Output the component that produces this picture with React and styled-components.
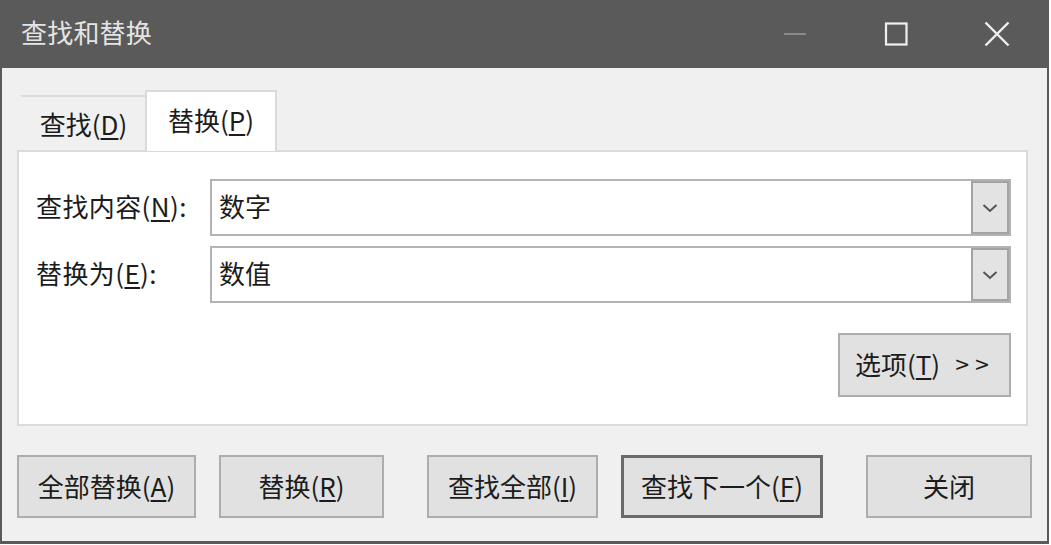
import React from 'react'
import styled, { createGlobalStyle } from 'styled-components'

const Global = createGlobalStyle`
  html, body { margin: 0; padding: 0; background: #fff; }
  body { font-family: "Noto Sans CJK SC", "Noto Sans", sans-serif; }
`

const Window = styled.div`
  width: 1049px;
  height: 544px;
  box-sizing: border-box;
  background: #5a5a5a;
  padding: 0 2px 3px 2px;
  display: flex;
  flex-direction: column;
`

const TitleBar = styled.div`
  height: 68px;
  flex: none;
  display: flex;
  align-items: center;
  padding-left: 19px;
`

const Title = styled.div`
  flex: 1;
  color: #e4e4e4;
  font-size: 26px;
  letter-spacing: 0.2px;
  padding-bottom: 5px;
`

const Caption = styled.div`
  width: 101px;
  height: 68px;
  display: flex;
  align-items: center;
  justify-content: center;
`

const Body = styled.div`
  flex: 1;
  background: #f0f0f0;
  padding: 0 15px;
  display: flex;
  flex-direction: column;
  color: #1c1c1c;
  font-size: 26px;
`

const Tabs = styled.div`
  margin-top: 22px;
  height: 60px;
  display: flex;
  align-items: flex-end;
  padding-left: 3px;
  position: relative;
  z-index: 1;
`

const Tab = styled.div`
  box-sizing: border-box;
  width: ${p => p.$w}px;
  height: ${p => (p.$active ? 61 : 55)}px;
  margin-bottom: ${p => (p.$active ? -1 : 0)}px;
  background: ${p => (p.$active ? '#fff' : '#f0f0f0')};
  border: 2px solid #dadada;
  border-bottom: none;
  border-left-color: ${p => (p.$active ? '#dadada' : 'transparent')};
  border-right: ${p => (p.$active ? '2px solid #dadada' : 'none')};
  display: flex;
  align-items: center;
  justify-content: center;
  padding-bottom: ${p => (p.$active ? 4 : 0)}px;
`

const Panel = styled.div`
  box-sizing: border-box;
  height: 276px;
  margin-right: 4px;
  background: #fff;
  border: 2px solid #dadada;
  padding: 27px 15px 27px 17px;
  display: flex;
  flex-direction: column;
`

const Row = styled.div`
  display: flex;
  align-items: center;
  margin-bottom: ${p => p.$mb || 0}px;
`

const Label = styled.div`
  width: 174px;
  flex: none;
  padding-bottom: 4px;
  letter-spacing: 0.4px;
`

const Combo = styled.div`
  flex: 1;
  height: 57px;
  box-sizing: border-box;
  border: 2px solid #b3b3b3;
  display: flex;
  align-items: stretch;
`

const ComboText = styled.div`
  flex: 1;
  display: flex;
  align-items: center;
  padding: 0 0 4px 7px;
`

const DropBtn = styled.div`
  width: 38px;
  box-sizing: border-box;
  background: #e3e3e3;
  border: 2px solid #a3a3a3;
  display: flex;
  align-items: center;
  justify-content: center;
`

const Key = styled.u`
  text-underline-offset: 3px;
  text-decoration-thickness: 1.5px;
`

const Options = styled.div`
  margin-top: 30px;
  display: flex;
  justify-content: flex-end;
`

const Button = styled.div`
  box-sizing: border-box;
  width: ${p => p.$w}px;
  height: ${p => p.$h || 63}px;
  margin-left: ${p => p.$ml || 0}px;
  flex: none;
  background: #e1e1e1;
  border: ${p => (p.$default ? '3px solid #6a6a6a' : '2px solid #adadad')};
  display: flex;
  align-items: center;
  justify-content: center;
  white-space: nowrap;
  padding-bottom: 3px;
`

const Arrows = styled.span`
  font-size: 19px;
  margin-left: 14px;
  letter-spacing: 4px;
  font-family: "DejaVu Sans", sans-serif;
`

const ButtonRow = styled.div`
  margin-top: 29px;
  display: flex;
`

const Chevron = () => (
  <svg width="16" height="10" viewBox="0 0 16 10">
    <path d="M1.5 2 L8 8 L14.5 2" fill="none" stroke="#555" strokeWidth="2" />
  </svg>
)

export default function App() {
  return (
    <>
      <Global />
      <Window>
        <TitleBar>
          <Title>查找和替换</Title>
          <Caption>
            <svg width="24" height="4" viewBox="0 0 24 4">
              <rect x="1" y="1" width="22" height="2" fill="#8a8a8a" />
            </svg>
          </Caption>
          <Caption>
            <svg width="24" height="24" viewBox="0 0 24 24">
              <rect x="2" y="1.5" width="20.5" height="21" fill="none" stroke="#f0f0f0" strokeWidth="2.2" />
            </svg>
          </Caption>
          <Caption>
            <svg width="26" height="26" viewBox="0 0 26 26">
              <path d="M1.5 1.5 L24.5 24.5 M24.5 1.5 L1.5 24.5" stroke="#f0f0f0" strokeWidth="2.4" />
            </svg>
          </Caption>
        </TitleBar>
        <Body>
          <Tabs>
            <Tab $w={125}>查找(<Key>D</Key>)</Tab>
            <Tab $w={132} $active>替换(<Key>P</Key>)</Tab>
          </Tabs>
          <Panel>
            <Row $mb={10}>
              <Label>查找内容(<Key>N</Key>):</Label>
              <Combo>
                <ComboText>数字</ComboText>
                <DropBtn><Chevron /></DropBtn>
              </Combo>
            </Row>
            <Row>
              <Label>替换为(<Key>E</Key>):</Label>
              <Combo>
                <ComboText>数值</ComboText>
                <DropBtn><Chevron /></DropBtn>
              </Combo>
            </Row>
            <Options>
              <Button $w={173} $h={64}>
                选项(<Key>T</Key>)<Arrows>&gt;&gt;</Arrows>
              </Button>
            </Options>
          </Panel>
          <ButtonRow>
            <Button $w={179}>全部替换(<Key>A</Key>)</Button>
            <Button $w={165} $ml={23}>替换(<Key>R</Key>)</Button>
            <Button $w={171} $ml={43}>查找全部(<Key>I</Key>)</Button>
            <Button $w={202} $ml={23} $default>查找下一个(<Key>F</Key>)</Button>
            <Button $w={166} $ml={43}>关闭</Button>
          </ButtonRow>
        </Body>
      </Window>
    </>
  )
}
